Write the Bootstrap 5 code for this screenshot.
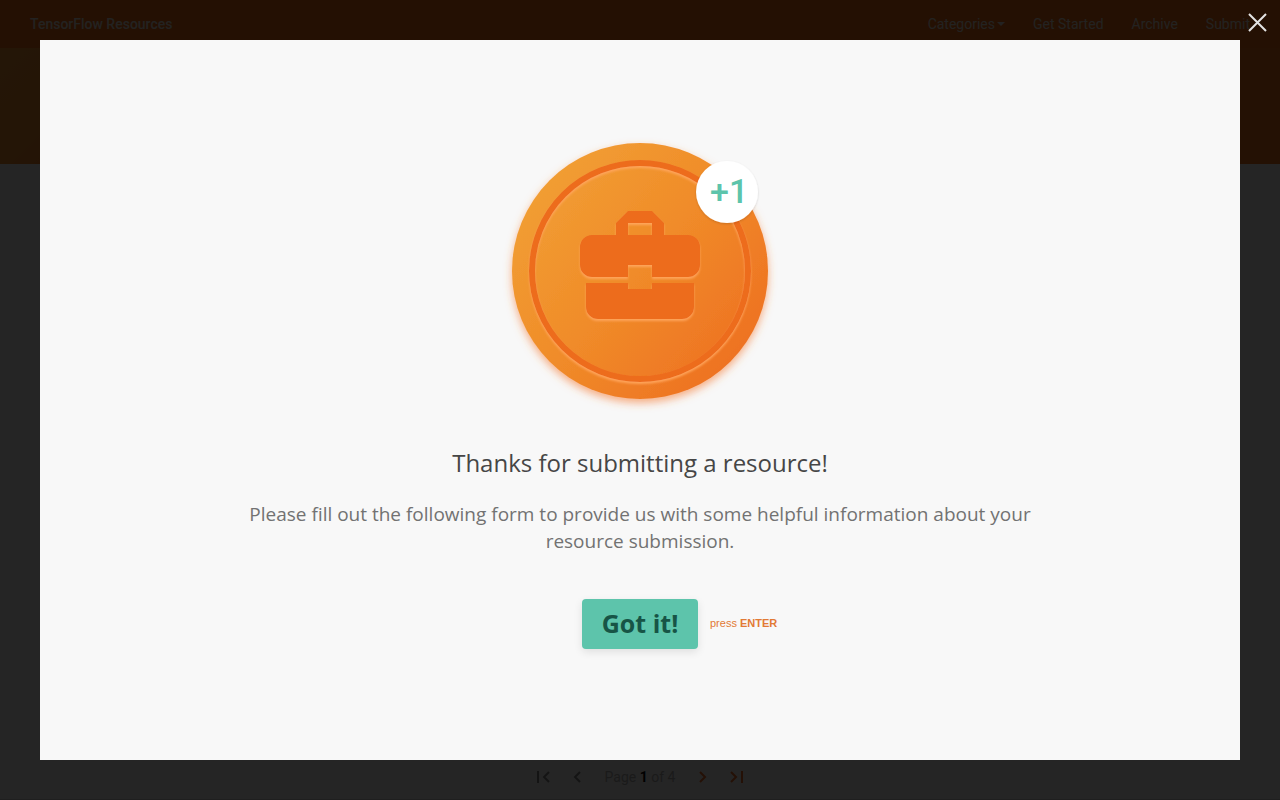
<!DOCTYPE html>
<html lang="en">
<head>
<meta charset="utf-8">
<meta name="viewport" content="width=device-width, initial-scale=1">
<title>TensorFlow Resources</title>
<link href="https://cdn.jsdelivr.net/npm/bootstrap@5.3.0/dist/css/bootstrap.min.css" rel="stylesheet">
<style>
  body { font-family: Roboto, sans-serif; font-size: 14px; background: #f7f7f7; }
  .site-bar { background: #ef6c18; height: 48px; padding: 0 30px; color: #ece4dc; }
  .site-bar a { color: #ece4dc; text-decoration: none; }
  .site-title { font-weight: 500; }
  .site-links { gap: 28px; }
  .caret-down { display: inline-block; border: 4px solid transparent; border-top-color: currentColor; border-bottom: 0; margin-left: 2px; vertical-align: 3px; }
  .site-hero { height: 116px; background: linear-gradient(135deg, #f09330, #ef8a2a 9%, #ef7020 16%); }
  .pager { height: 45px; color: #b0b0b0; border-bottom: 1px solid #ccc; gap: 12px; }
  .pager button { border: 0; background: none; padding: 0; width: 24px; height: 24px; line-height: 0; color: #888; }
  .pager-text { margin: 0 4px; }
  .pager .pager-on { color: #ef6c28; }
  .pager b { color: #000; font-weight: 700; }
  .survey-overlay { background: rgba(0, 0, 0, .85); padding: 40px; }
  .survey-panel { background: #f8f8f8; font-family: "Open Sans", sans-serif; padding-bottom: 8px; }
  .survey-close { top: 10px; right: 10px; width: 25px; height: 25px; padding: 0; border: 0; background: none; line-height: 0; }
  .coin { width: 256px; height: 256px; overflow: visible; }
  .survey-title { font-size: 24px; line-height: 32px; margin: 48px 0 22px; color: #464646; }
  .survey-text { font-size: 19px; line-height: 27px; max-width: 800px; margin: 0 0 44px; color: #727272; }
  .survey-action { width: 116px; }
  .survey-btn { width: 116px; height: 50px; padding: 0; border: 0; border-radius: 4px; background: #5dc4ab; color: #175446; font-size: 25px; font-weight: 700; box-shadow: 0 3px 8px rgba(0, 0, 0, .1); }
  .survey-hint { left: 128px; top: 16px; font: 11px/16px "Liberation Sans", sans-serif; color: #e27a35; white-space: nowrap; }
</style>
</head>
<body>
<div class="d-flex flex-column min-vh-100">
  <header class="site-bar d-flex align-items-center justify-content-between">
    <a class="site-title" href="#">TensorFlow Resources</a>
    <nav class="site-links d-flex">
      <a href="#">Categories<span class="caret-down"></span></a>
      <a href="#">Get Started</a>
      <a href="#">Archive</a>
      <a href="#">Submit</a>
    </nav>
  </header>
  <section class="site-hero"></section>
  <main class="flex-grow-1"></main>
  <footer class="pager d-flex align-items-center justify-content-center">
    <button aria-label="First page"><svg width="24" height="24" fill="none" stroke="currentColor" stroke-width="2"><path d="M9 6v12M20 7l-5 5 5 5"/></svg></button>
    <button aria-label="Previous page"><svg width="24" height="24" fill="none" stroke="currentColor" stroke-width="2"><path d="M15 7l-5 5 5 5"/></svg></button>
    <span class="pager-text">Page <b>1</b> of 4</span>
    <button class="pager-on" aria-label="Next page"><svg width="24" height="24" fill="none" stroke="currentColor" stroke-width="2"><path d="M9 7l5 5-5 5"/></svg></button>
    <button class="pager-on" aria-label="Last page"><svg width="24" height="24" fill="none" stroke="currentColor" stroke-width="2"><path d="M4 7l5 5-5 5M15 6v12"/></svg></button>
  </footer>
</div>

<div class="survey-overlay position-fixed top-0 start-0 w-100 h-100 d-flex" role="dialog" aria-modal="true" aria-labelledby="surveyTitle">
  <button class="survey-close position-absolute" aria-label="Close">
    <svg width="25" height="25" fill="none" stroke="#e4e4e4" stroke-width="2"><path d="M4 4l17 17M21 4L4 21"/></svg>
  </button>
  <div class="survey-panel flex-grow-1 d-flex flex-column align-items-center justify-content-center text-center">
    <svg class="coin" viewBox="0 0 256 256" aria-hidden="true">
      <defs>
        <linearGradient id="face" x1="0.1" y1="0.15" x2="0.9" y2="0.85">
          <stop offset="0" stop-color="#f19e33"/><stop offset=".5" stop-color="#f08b29"/><stop offset="1" stop-color="#ee7122"/>
        </linearGradient>
        <filter id="glow" x="-20%" y="-20%" width="140%" height="140%"><feDropShadow dx="0" dy="4" stdDeviation="4" flood-color="#f47a35" flood-opacity=".6"/></filter>
        <filter id="lift" x="-20%" y="-20%" width="140%" height="140%"><feDropShadow dx="0" dy="1" stdDeviation="1" flood-color="#000" flood-opacity=".16"/></filter>
        <filter id="edge" x="-10%" y="-10%" width="120%" height="120%"><feDropShadow dx="0" dy="2" stdDeviation="1" flood-color="#ffa65c" flood-opacity=".95"/></filter>
      </defs>
      <circle cx="128" cy="128" r="128" fill="url(#face)" filter="url(#glow)"/>
      <circle cx="128" cy="128" r="108" fill="none" stroke="#ed6c1d" stroke-width="6" filter="url(#edge)"/>
      <g fill="#ed6c1d" filter="url(#edge)">
        <path fill-rule="evenodd" d="M104 92V80l12-12h24l12 12v12h24a12 12 0 0 1 12 12v18a12 12 0 0 1-12 12h-36v-12h-24v12H80a12 12 0 0 1-12-12v-18a12 12 0 0 1 12-12zM116 80v12h24V80z"/>
        <path d="M74 140h42v6h24v-6h42v24a12 12 0 0 1-12 12H86a12 12 0 0 1-12-12z"/>
      </g>
      <circle cx="215" cy="49" r="31" fill="#fff" filter="url(#lift)"/>
      <text x="198" y="60" font-family="Roboto, sans-serif" font-size="34" font-weight="500" fill="#5dc4ab">+1</text>
    </svg>
    <h1 class="survey-title fw-normal" id="surveyTitle">Thanks for submitting a resource!</h1>
    <p class="survey-text">Please fill out the following form to provide us with some helpful information about your resource submission.</p>
    <div class="survey-action position-relative">
      <button class="survey-btn">Got it!</button>
      <span class="survey-hint position-absolute">press <b>ENTER</b></span>
    </div>
  </div>
</div>
<script src="https://cdn.jsdelivr.net/npm/bootstrap@5.3.0/dist/js/bootstrap.bundle.min.js"></script>
</body>
</html>
